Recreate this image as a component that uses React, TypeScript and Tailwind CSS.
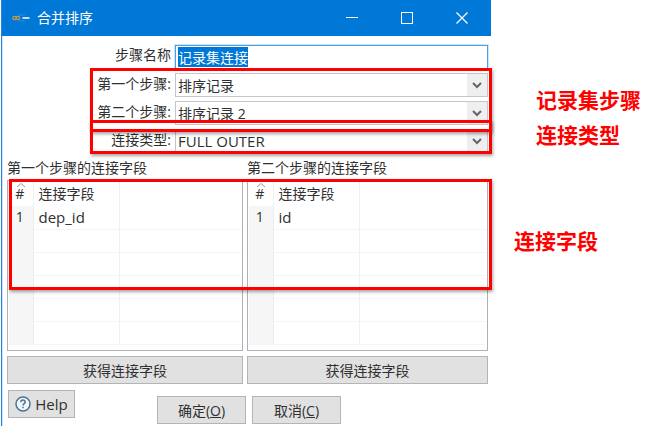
import { useEffect, useRef } from "react";

const steps = ["排序记录", "排序记录 2"];
const joinTypes = ["INNER", "LEFT OUTER", "RIGHT OUTER", "FULL OUTER"];

function Chevron() {
  return (
    <span className="pointer-events-none absolute top-px right-px bottom-px flex w-5 items-center justify-center bg-[#efefef]">
      <svg viewBox="0 0 10 7" className="h-[7px] w-[10px]" fill="none" stroke="#666666" strokeWidth="2">
        <path d="M1 1 L5 5 L9 1" />
      </svg>
    </span>
  );
}

type SelectRowProps = { id: string; label: string; value: string; options: string[]; textSize?: string };

function SelectRow({ id, label, value, options, textSize = "pt-px text-[14px]" }: SelectRowProps) {
  return (
    <div className="flex h-6 gap-1">
      <label htmlFor={id} className="w-[169px] shrink-0 text-right leading-[22px]">
        {label}
      </label>
      <div className="relative flex-1">
        <select
          id={id}
          defaultValue={value}
          className={`block h-6 w-full appearance-none border border-[#c5c5cb] bg-white pl-0.5 leading-[22px] outline-none ${textSize}`}
        >
          {options.map((o) => (
            <option key={o}>{o}</option>
          ))}
        </select>
        <Chevron />
      </div>
    </div>
  );
}

function FieldTable({ id, caption, field }: { id: string; caption: string; field: string }) {
  const rows = [field, "", "", "", "", ""];
  return (
    <div className="flex min-w-0 flex-col">
      <h2 id={id} className="h-6 leading-6">
        {caption}
      </h2>
      <div className="h-[171px] overflow-hidden border border-[#b0b0b8] px-px">
        <table aria-labelledby={id} className="w-full table-fixed border-collapse text-left">
          <colgroup>
            <col className="w-6" />
            <col className="w-[86px]" />
            <col />
          </colgroup>
          <thead>
            <tr className="h-[25px]">
              <th className="relative border-r border-[#edf1f5] py-0 pr-0.5 pl-0 text-center font-normal">
                <svg viewBox="0 0 8 4" className="absolute top-0.5 left-2 h-1 w-2" fill="none" stroke="#999999">
                  <path d="M0 4 L4 0.5 L8 4" />
                </svg>
                #
              </th>
              <th className="border-r border-[#edf1f5] py-0 pr-0 pl-[5px] font-normal">连接字段</th>
              <th className="p-0" />
            </tr>
          </thead>
          <tbody>
            {rows.map((r, i) => (
              <tr key={i} className="h-[23px] border-b border-[#f4f5f7]">
                <td className="border-r border-[#e8eef4] bg-[#f6f6f6] py-0 pr-0.5 pl-0 text-center leading-[22px]">
                  {r ? i + 1 : ""}
                </td>
                <td className="border-r border-[#edf1f5] py-0 pr-0 pl-[5px] text-[15px] leading-[22px]">{r}</td>
                <td className="p-0" />
              </tr>
            ))}
          </tbody>
        </table>
      </div>
      <button className="mt-[5px] h-7 border border-[#b4b4b4] bg-[#e1e1e1]">获得连接字段</button>
    </div>
  );
}

export default function App() {
  const nameRef = useRef<HTMLInputElement>(null);

  useEffect(() => {
    nameRef.current?.focus();
    nameRef.current?.select();
  }, []);

  return (
    <div className="flex items-start bg-white font-['Open_Sans','Noto_Sans_CJK_SC',sans-serif] text-[14px] text-[#303030]">
      <main className="relative ml-px min-w-0 flex-1 border-l border-[#1f86dc] pb-0.5 shadow-[inset_1px_0_0_#cfe6f9]">
        <header className="flex h-9 items-center bg-[#0078d7] text-white">
          <svg viewBox="0 0 18 8" className="mr-[7px] ml-2.5 h-2 w-[18px] shrink-0" fill="none">
            <path d="M6 1 H13 M6 7 H13" stroke="#2b8bdc" />
            <circle cx="2.5" cy="4" r="1.7" stroke="#c49a4a" strokeWidth="1.2" />
            <circle cx="5.9" cy="4" r="1.7" stroke="#c49a4a" strokeWidth="1.2" />
            <path d="M10.5 4 H17.5" stroke="#c9dcec" strokeWidth="2" />
          </svg>
          <h1 className="flex-1 pb-0.5">合并排序</h1>
          <div className="flex gap-[31px] pr-[17px]">
            <button aria-label="最小化" className="flex h-6 w-6 items-center justify-center">
              <svg viewBox="0 0 12 12" className="h-3 w-3" stroke="currentColor">
                <path d="M0 5.5 H12" />
              </svg>
            </button>
            <button aria-label="最大化" className="flex h-6 w-6 items-center justify-center">
              <svg viewBox="0 0 12 12" className="h-3 w-3" fill="none" stroke="currentColor">
                <rect x="0.5" y="0.5" width="11" height="11" />
              </svg>
            </button>
            <button aria-label="关闭" className="flex h-6 w-6 items-center justify-center">
              <svg viewBox="0 0 12 12" className="h-3 w-3" stroke="currentColor" strokeWidth="1.2">
                <path d="M0.5 0.5 L11.5 11.5 M11.5 0.5 L0.5 11.5" />
              </svg>
            </button>
          </div>
        </header>

        <form onSubmit={(e) => e.preventDefault()}>
          <div className="flex flex-col gap-1 pt-[9px] pr-[3px]">
            <div className="flex h-6 gap-1">
              <label htmlFor="name" className="w-[169px] shrink-0 text-right leading-5">
                步骤名称
              </label>
              <input
                id="name"
                ref={nameRef}
                defaultValue="记录集连接"
                className="h-6 min-w-0 flex-1 border border-[#4a9fe3] bg-white pl-0.5 caret-transparent shadow-[0_0_0_1px_#cfe6f9] outline-none selection:bg-[#0078d7] selection:text-white"
              />
            </div>
            <SelectRow id="first" label="第一个步骤:" value="排序记录" options={steps} />
            <SelectRow id="second" label="第二个步骤:" value="排序记录 2" options={steps} />
            <SelectRow id="type" label="连接类型:" value="FULL OUTER" options={joinTypes} textSize="text-[15px]" />
          </div>

          <div className="grid grid-cols-[236fr_241fr] gap-1 pt-[3px] pr-[3px] pl-[5px]">
            <FieldTable id="fields-1" caption="第一个步骤的连接字段" field="dep_id" />
            <FieldTable id="fields-2" caption="第二个步骤的连接字段" field="id" />
          </div>

          <div className="flex items-start pt-[6px] pl-[6px]">
            <button className="flex h-7 w-[67px] items-center justify-center gap-1 border border-[#b4b4b4] bg-[#e1e1e1] text-[15px]">
              <svg viewBox="0 0 16 16" className="h-4 w-4" fill="none" stroke="#4b7393" strokeWidth="1.5">
                <circle cx="8" cy="8" r="7" fill="#f4f7f9" />
                <path d="M5.8 6.3 C5.8 3.3 10.3 3.5 10.2 6.1 C10.1 7.6 8 7.7 8 9.5 M8 10.8 V12.3" />
              </svg>
              Help
            </button>
            <div className="mt-1.5 ml-[82px] flex gap-1.5">
              <button className="h-7 w-[89px] border border-[#b4b4b4] bg-[#e1e1e1]">
                确定(<u>O</u>)
              </button>
              <button className="h-7 w-[89px] border border-[#b4b4b4] bg-[#e1e1e1]">
                取消(<u>C</u>)
              </button>
            </div>
          </div>
        </form>

        <div className="pointer-events-none absolute top-[68px] -right-px left-[88px] h-16 border-3 border-[#ff0000] shadow-[1px_2px_3px_rgba(0,0,0,0.35)]" />
        <div className="pointer-events-none absolute top-[120px] -right-px left-[88px] h-[34px] border-3 border-[#ff0000] shadow-[1px_2px_3px_rgba(0,0,0,0.35)]" />
        <div className="pointer-events-none absolute top-[179px] -right-px left-[7px] h-[111px] border-3 border-[#ff0000] shadow-[1px_2px_3px_rgba(0,0,0,0.35)]" />
      </main>

      <aside className="w-[154px] shrink-0 pt-[83px] text-[21px] leading-[35px] font-bold text-[#ff0000]">
        <p className="pl-[45px] whitespace-nowrap">记录集步骤</p>
        <p className="pl-[45px]">连接类型</p>
        <p className="mt-[71px] pl-[23px]">连接字段</p>
      </aside>
    </div>
  );
}
